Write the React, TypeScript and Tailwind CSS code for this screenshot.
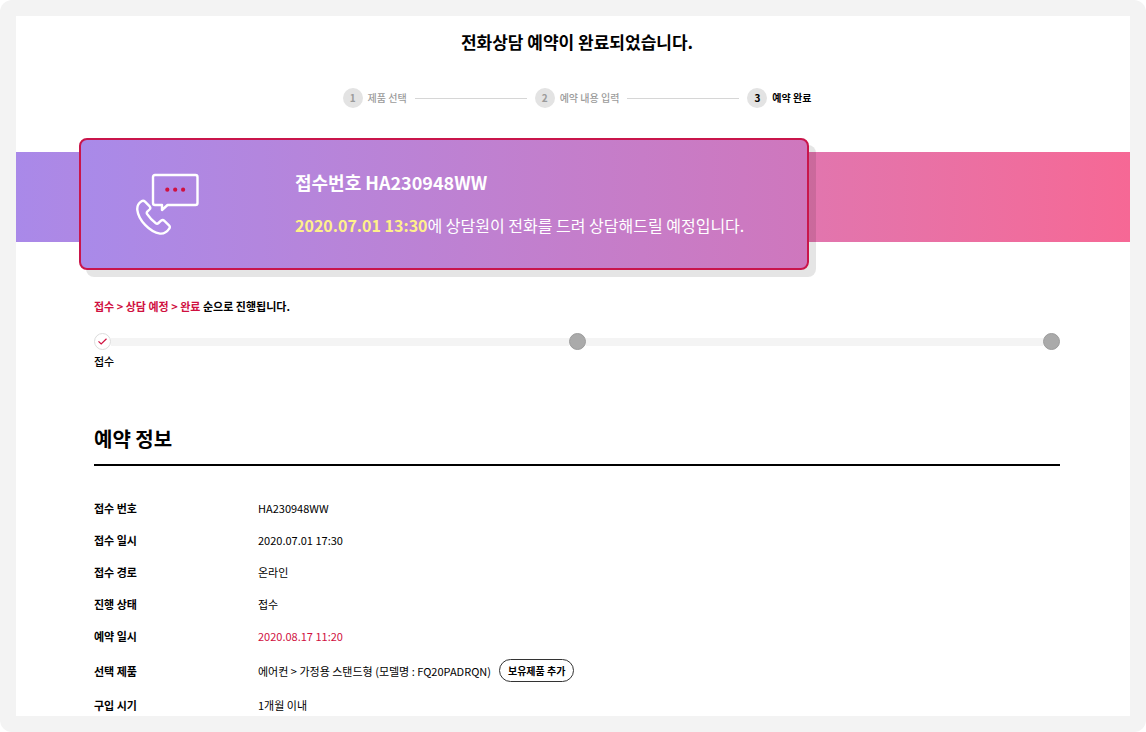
import React from 'react';

const steps = ['제품 선택', '예약 내용 입력', '예약 완료'];

const rows = [
  { label: '접수 번호', value: 'HA230948WW' },
  { label: '접수 일시', value: '2020.07.01 17:30' },
  { label: '접수 경로', value: '온라인' },
  { label: '진행 상태', value: '접수' },
  { label: '예약 일시', value: '2020.08.17 11:20', accent: true },
  { label: '선택 제품', value: '에어컨 > 가정용 스탠드형 (모델명 : FQ20PADRQN)', action: '보유제품 추가' },
  { label: '구입 시기', value: '1개월 이내' },
];

function CallIcon() {
  return (
    <svg width="64" height="64" viewBox="0 0 64 64" fill="none" className="shrink-0" aria-hidden="true">
      <g stroke="#fff" strokeWidth="2.4" strokeLinejoin="round" strokeLinecap="round">
        <path d="M26 33H19Q17 33 17 31V5Q17 3 19 3H59.5Q61.5 3 61.5 5V31Q61.5 33 59.5 33H31.5L26 38Z" />
        <path d="M5.5 29.3Q7.3 28 9 29.6L13.7 34.4Q15 36 13.5 37.5L11.3 39.6Q10.3 40.8 11.2 42.2Q14.8 47.7 19.8 51.2Q21.2 52.2 22.5 51L25 48.7Q26.8 47.4 28.4 48.9L33 53.3Q34.5 55 33.2 56.7C31 60 28 62 24 61.6C13.5 59.8 2.4 48 1.3 37.8C1 34 2.8 31 5.5 29.3Z" />
      </g>
      <g fill="#d0103f">
        <circle cx="31.3" cy="17.7" r="2.1" />
        <circle cx="39.2" cy="17.7" r="2.1" />
        <circle cx="47.1" cy="17.7" r="2.1" />
      </g>
    </svg>
  );
}

function StepBar() {
  return (
    <ol className="mt-[34px] flex items-center justify-center text-[10px] leading-5">
      {steps.map((step, i) => {
        const current = i === steps.length - 1;
        return (
          <li
            key={step}
            aria-current={current ? 'step' : undefined}
            className={`flex items-center ${current ? 'font-bold text-black' : 'font-medium text-[#9b9b9b]'}`}
          >
            <span className="flex size-5 items-center justify-center rounded-full bg-[#e3e3e3] font-bold">{i + 1}</span>
            <span className="ml-[5px]">{step}</span>
            {!current && <span className="mx-2 h-px w-28 bg-[#d6d6d6]" />}
          </li>
        );
      })}
    </ol>
  );
}

function Progress() {
  return (
    <div className="mt-[18px]">
      <div className="flex items-center">
        <span className="flex size-[17px] items-center justify-center rounded-full border border-[#dcdcdc] bg-white">
          <svg width="9" height="7" viewBox="0 0 9 7" fill="none" stroke="#d0103f" strokeWidth="1.2" aria-hidden="true">
            <path d="M.5 3.3 3.2 6 8.5 .8" />
          </svg>
        </span>
        <span className="h-2 flex-1 bg-[#f4f4f4]" />
        <span className="size-[17px] rounded-full border border-[#9c9c9c] bg-[#aaa]" />
        <span className="h-2 flex-1 bg-[#f4f4f4]" />
        <span className="size-[17px] rounded-full border border-[#9c9c9c] bg-[#aaa]" />
      </div>
      <p className="mt-0.5 text-[11px] leading-[18px] font-medium">접수</p>
    </div>
  );
}

export default function App() {
  return (
    <div className="bg-white font-['Noto_Sans_CJK_KR',sans-serif] text-black">
      <div className="flex min-h-screen flex-col rounded-xl bg-[#f3f3f3] p-4">
        <main className="flex-1 bg-white">
          <header className="pt-[14px] pr-[70px] pl-[78px]">
            <h1 className="text-center text-[17px] leading-6 font-bold">전화상담 예약이 완료되었습니다.</h1>
            <StepBar />
          </header>

          {/* Reservation number card laid over the gradient band */}
          <section className="mt-[30px] grid">
            <div className="col-start-1 row-start-1 mt-[14px] h-[90px] bg-linear-to-r from-[#a989e9] to-[#f66895]" />
            <div className="col-start-1 row-start-1 mr-[70px] ml-[63px] flex h-[132px] max-w-[730px] items-center rounded-lg border-2 border-[#c9154b] bg-linear-to-r from-[#a98ae9] to-[#cf77bd] pl-[55px] text-white shadow-[7px_7px_0_rgba(0,0,0,0.1)]">
              <CallIcon />
              <div className="ml-[95px] pb-0.5 leading-6">
                <p className="text-[18px] font-bold">접수번호 HA230948WW</p>
                <p className="mt-[19px] text-[16px]">
                  <strong className="font-bold text-[#fff08a]">2020.07.01 13:30</strong>에 상담원이 전화를 드려 상담해드릴 예정입니다.
                </p>
              </div>
            </div>
          </section>

          <div className="pr-[70px] pl-[78px]">
            <p className="mt-[27px] text-[11px] leading-[18px] font-bold">
              <span className="text-[#d0103f]">접수 &gt; 상담 예정 &gt; 완료</span> 순으로 진행됩니다.
            </p>
            <Progress />

            <h2 className="mt-[55px] border-b-2 border-black pb-[11px] text-[20px] leading-7 font-bold">예약 정보</h2>
            <table className="mt-[19px] w-full text-left text-[11px] leading-[18px]">
              <tbody>
                {rows.map((row) => (
                  <tr key={row.label}>
                    <th scope="row" className="w-[164px] pt-[14px] font-bold">{row.label}</th>
                    <td className={row.accent ? 'pt-[14px] text-[#d0103f]' : 'pt-[14px]'}>
                      <div className="flex items-center gap-2">
                        <span>{row.value}</span>
                        {row.action && (
                          <button
                            type="button"
                            className="h-[23px] rounded-full border border-[#333] px-2 text-[10px] leading-4 font-bold"
                          >
                            {row.action}
                          </button>
                        )}
                      </div>
                    </td>
                  </tr>
                ))}
              </tbody>
            </table>
          </div>
        </main>
      </div>
    </div>
  );
}
